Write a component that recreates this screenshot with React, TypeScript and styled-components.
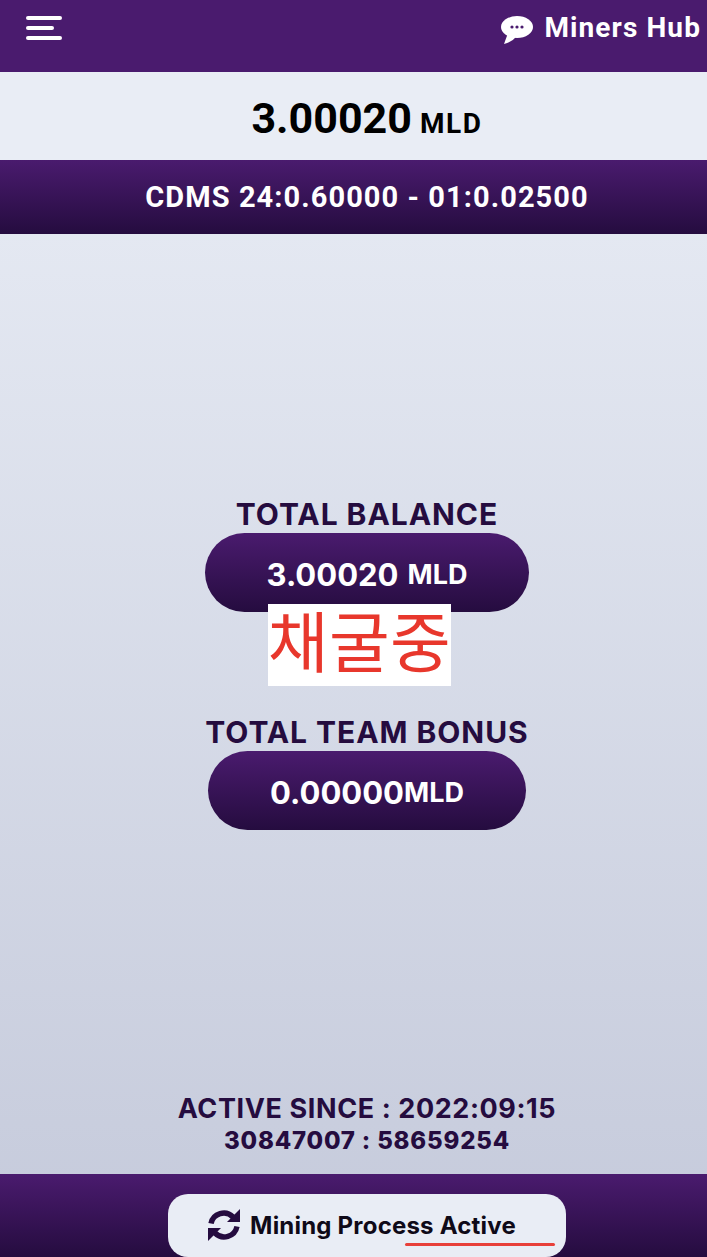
import styled, { createGlobalStyle } from 'styled-components'

const GlobalStyle = createGlobalStyle`
  html,
  body {
    margin: 0;
    padding: 0;
  }

  body {
    font-family: Inter, "Liberation Sans", sans-serif;
  }
`

const Page = styled.div`
  width: 707px;
  height: 1257px;
  display: flex;
  flex-flow: column nowrap;
  overflow: hidden;
  background: linear-gradient(to bottom, #ebeff7, #c5cadb);
`

const TopBar = styled.header`
  height: 72px;
  flex: none;
  box-sizing: border-box;
  padding: 13px 6px 0 26px;
  display: flex;
  justify-content: space-between;
  align-items: flex-start;
  background: #4a1b6e;
`

const MenuButton = styled.div`
  width: 36px;
  padding-top: 3px;
  display: flex;
  flex-flow: column nowrap;
  align-items: flex-start;
  gap: 6px;
`

const MenuLine = styled.span<{ $short?: boolean }>`
  display: block;
  width: ${(p) => (p.$short ? '28px' : '36px')};
  height: 4px;
  border-radius: 2px;
  background: #fff;
`

const Brand = styled.div`
  display: flex;
  align-items: flex-start;
  gap: 11px;
  color: #fff;
  font-family: Roboto, sans-serif;
  font-size: 28px;
  font-weight: 700;
  line-height: 30px;
  letter-spacing: 1.1px;
`

const BubbleIcon = styled.svg`
  width: 32px;
  height: 28px;
  margin-top: 3px;
  flex: none;
`

const BalanceBar = styled.div`
  height: 88px;
  flex: none;
  box-sizing: border-box;
  padding: 3px 0 0 27px;
  display: flex;
  justify-content: center;
  align-items: baseline;
  align-content: center;
  flex-wrap: wrap;
  gap: 8px;
  color: #000;
  background: #e9edf5;
  font-family: Roboto, sans-serif;
  font-weight: 700;
`

const BalanceValue = styled.span`
  font-size: 43px;
`

const BalanceUnit = styled.span`
  font-size: 28px;
  letter-spacing: 1.6px;
`

const RateBar = styled.div`
  height: 74px;
  flex: none;
  box-sizing: border-box;
  padding-left: 27px;
  display: flex;
  justify-content: center;
  align-items: center;
  color: #fff;
  background: linear-gradient(to bottom, #4a1b6e, #250c3f);
  font-family: Roboto, sans-serif;
  font-size: 29px;
  font-weight: 700;
  letter-spacing: 1.07px;
`

const Content = styled.main`
  flex: 1;
  display: flex;
  flex-flow: column nowrap;
  align-items: center;
  padding: 262px 0 0 27px;
`

const Heading = styled.h2<{ $gap?: number }>`
  margin: ${(p) => p.$gap ?? 0}px 0 0;
  color: #250c3f;
  font-size: 30px;
  font-weight: 700;
  line-height: 37px;
  letter-spacing: 0.95px;
`

const Pill = styled.div<{ $width: number }>`
  width: ${(p) => p.$width}px;
  height: 79px;
  box-sizing: border-box;
  padding-top: 3px;
  display: flex;
  justify-content: center;
  align-items: center;
  border-radius: 40px;
  color: #fff;
  background: linear-gradient(to bottom, #4a1b6e, #250c3f);
  font-weight: 700;
`

const PillValue = styled.span`
  font-size: 31px;
`

const PillUnit = styled.span<{ $gap?: number }>`
  margin-left: ${(p) => p.$gap ?? 0}px;
  font-size: 27px;
`

const MiningLabel = styled.div`
  width: 183px;
  height: 82px;
  margin-top: -8px;
  margin-left: -15px;
  position: relative;
  display: flex;
  justify-content: center;
  align-items: flex-start;
  color: #e8372c;
  background: #fff;
  font-family: "Noto Sans CJK KR", sans-serif;
  font-size: 66px;
  font-weight: 400;
  line-height: 68px;
  letter-spacing: 0.5px;
  white-space: nowrap;
`

const Since = styled.div`
  margin-top: auto;
  padding-bottom: 18px;
  color: #250c3f;
  text-align: center;
  font-weight: 700;
`

const SinceDate = styled.div`
  font-size: 27px;
  line-height: 32px;
  letter-spacing: 0.6px;
`

const SinceIds = styled.div`
  font-size: 24px;
  font-weight: 800;
  line-height: 31px;
  letter-spacing: 0.8px;
`

const BottomBar = styled.footer`
  height: 83px;
  flex: none;
  box-sizing: border-box;
  padding: 20px 0 0 27px;
  display: flex;
  justify-content: center;
  background: linear-gradient(to bottom, #4a1b6e, #250c3f);
`

const StatusButton = styled.div`
  width: 398px;
  height: 63px;
  position: relative;
  box-sizing: border-box;
  padding: 0 10px 1px 0;
  display: flex;
  justify-content: center;
  align-items: center;
  gap: 10px;
  border-radius: 20px;
  color: #0f0a18;
  background: #e9edf5;
  font-size: 24px;
  font-weight: 700;
  letter-spacing: 0.2px;
`

const SyncIcon = styled.svg`
  width: 32px;
  height: 32px;
  flex: none;
`

const Underline = styled.span`
  position: absolute;
  left: 237px;
  bottom: 11px;
  width: 150px;
  height: 3px;
  border-radius: 2px;
  background: #e8403a;
`

export default function App() {
  return (
    <Page>
      <GlobalStyle />
      <TopBar>
        <MenuButton>
          <MenuLine />
          <MenuLine $short />
          <MenuLine />
        </MenuButton>
        <Brand>
          <BubbleIcon viewBox="0 0 32 28">
            <ellipse cx="16" cy="11" rx="16" ry="11" fill="#fff" />
            <path d="M7 17 L3 28 Q11 26 15 21 Z" fill="#fff" />
            <circle cx="11" cy="11" r="1.6" fill="#4a1b6e" />
            <circle cx="16" cy="11" r="1.6" fill="#4a1b6e" />
            <circle cx="21" cy="11" r="1.6" fill="#4a1b6e" />
          </BubbleIcon>
          Miners Hub
        </Brand>
      </TopBar>
      <BalanceBar>
        <BalanceValue>3.00020</BalanceValue>
        <BalanceUnit>MLD</BalanceUnit>
      </BalanceBar>
      <RateBar>CDMS 24:0.60000 - 01:0.02500</RateBar>
      <Content>
        <Heading>TOTAL BALANCE</Heading>
        <Pill $width={324}>
          <PillValue>3.00020</PillValue>
          <PillUnit $gap={9}>MLD</PillUnit>
        </Pill>
        <MiningLabel>채굴중</MiningLabel>
        <Heading $gap={28}>TOTAL TEAM BONUS</Heading>
        <Pill $width={318}>
          <PillValue>0.00000</PillValue>
          <PillUnit>MLD</PillUnit>
        </Pill>
        <Since>
          <SinceDate>ACTIVE SINCE : 2022:09:15</SinceDate>
          <SinceIds>30847007 : 58659254</SinceIds>
        </Since>
      </Content>
      <BottomBar>
        <StatusButton>
          <SyncIcon viewBox="0 0 32 32">
            <path d="M3 14.5 A13 13 0 0 1 25 8" fill="none" stroke="#250c3f" strokeWidth="5.4" />
            <path d="M32 0 V13 H19 Z" fill="#250c3f" />
            <path d="M29 17.5 A13 13 0 0 1 7 24" fill="none" stroke="#250c3f" strokeWidth="5.4" />
            <path d="M0 32 V19 H13 Z" fill="#250c3f" />
          </SyncIcon>
          Mining Process Active
          <Underline />
        </StatusButton>
      </BottomBar>
    </Page>
  )
}
